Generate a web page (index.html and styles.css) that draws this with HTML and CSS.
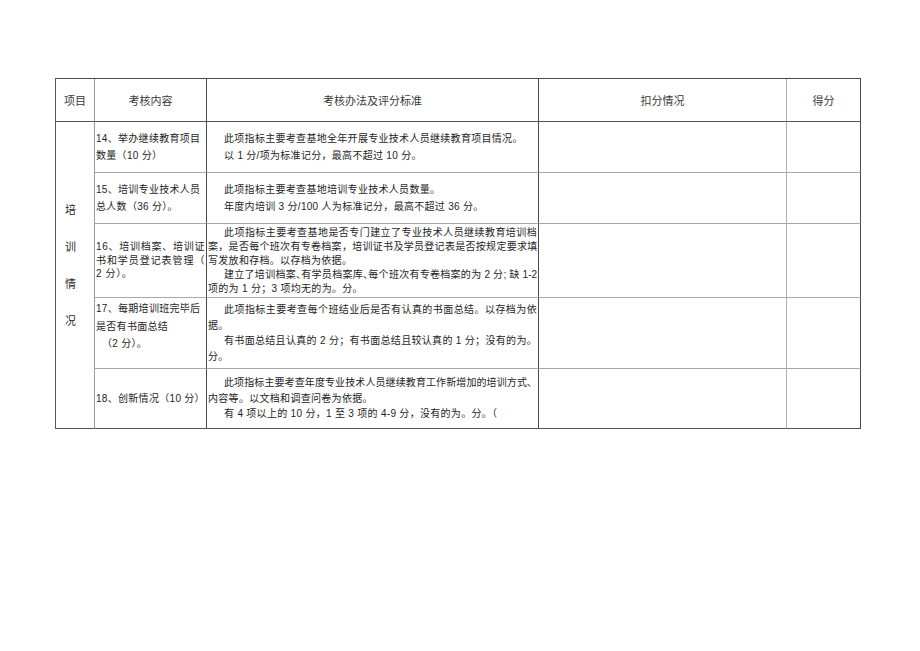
FILE: index.html
```html
<!DOCTYPE html>
<html lang="zh-CN">
<head>
<meta charset="utf-8">
<title>考核表</title>
<link rel="stylesheet" href="styles.css">
</head>
<body>
<div class="page">
  <table class="sheet">
    <thead>
      <tr class="r-head">
        <th class="c1">项目</th>
        <th class="c2">考核内容</th>
        <th class="c3">考核办法及评分标准</th>
        <th class="c4">扣分情况</th>
        <th class="c5">得分</th>
      </tr>
    </thead>
    <tbody>
      <tr class="r1">
        <td class="c1 cat" rowspan="5">
          <div class="cat-ch">培</div>
          <div class="cat-ch">训</div>
          <div class="cat-ch">情</div>
          <div class="cat-ch">况</div>
        </td>
        <td class="c2 item">
          <div class="ln">14、举办继续教育项目</div>
          <div class="ln">数量（10 分）</div>
        </td>
        <td class="c3 rule">
          <div class="ln ind">此项指标主要考查基地全年开展专业技术人员继续教育项目情况。</div>
          <div class="ln ind">以 1 分/项为标准记分，最高不超过 10 分。</div>
        </td>
        <td class="c4"></td>
        <td class="c5"></td>
      </tr>
      <tr class="r2">
        <td class="c2 item">
          <div class="ln">15、培训专业技术人员</div>
          <div class="ln">总人数（36 分）。</div>
        </td>
        <td class="c3 rule">
          <div class="ln ind">此项指标主要考查基地培训专业技术人员数量。</div>
          <div class="ln ind">年度内培训 3 分/100 人为标准记分，最高不超过 36 分。</div>
        </td>
        <td class="c4"></td>
        <td class="c5"></td>
      </tr>
      <tr class="r3">
        <td class="c2 item item-tight">
          <div class="ln full">16、培训档案、培训证</div>
          <div class="ln full">书和学员登记表管理（</div>
          <div class="ln">2 分）。</div>
        </td>
        <td class="c3 rule rule-tight">
          <div class="ln ind full">此项指标主要考查基地是否专门建立了专业技术人员继续教育培训档</div>
          <div class="ln full">案，是否每个班次有专卷档案，培训证书及学员登记表是否按规定要求填</div>
          <div class="ln">写发放和存档。以存档为依据。</div>
          <div class="ln ind full squeeze">建立了培训档案<span class="half">、</span>有学员档案库<span class="half">、</span>每个班次有专卷档案的为 2 分; 缺 1-2</div>
          <div class="ln">项的为 1 分；3 项均无的为。分。</div>
        </td>
        <td class="c4"></td>
        <td class="c5"></td>
      </tr>
      <tr class="r4">
        <td class="c2 item item-top">
          <div class="ln">17、每期培训班完毕后</div>
          <div class="ln">是否有书面总结</div>
          <div class="ln sub">（2 分）。</div>
        </td>
        <td class="c3 rule rule-mid">
          <div class="ln ind full">此项指标主要考查每个班结业后是否有认真的书面总结。以存档为依</div>
          <div class="ln">据。</div>
          <div class="ln ind full">有书面总结且认真的 2 分；有书面总结且较认真的 1 分；没有的为。</div>
          <div class="ln">分。</div>
        </td>
        <td class="c4"></td>
        <td class="c5"></td>
      </tr>
      <tr class="r5">
        <td class="c2 item">
          <div class="ln">18、创新情况（10 分）</div>
        </td>
        <td class="c3 rule rule-mid">
          <div class="ln ind full squeeze">此项指标主要考查年度专业技术人员继续教育工作新增加的培训方式、</div>
          <div class="ln">内容等。以文档和调查问卷为依据。</div>
          <div class="ln ind">有 4 项以上的 10 分，1 至 3 项的 4-9 分，没有的为。分。（</div>
        </td>
        <td class="c4"></td>
        <td class="c5"></td>
      </tr>
    </tbody>
  </table>
</div>
</body>
</html>
```

FILE: styles.css
```css
html, body {
  margin: 0;
  padding: 0;
  background: #ffffff;
}

body {
  font-family: "Liberation Sans", "Noto Sans CJK SC", sans-serif;
  color: #1e1e1e;
}

.page {
  padding: 78px 0 0 55px;
}

.sheet {
  table-layout: fixed;
  border-collapse: separate;
  border-spacing: 0;
  width: 806px;
  border-top: 1px solid #4a4a4a;
  border-left: 1px solid #5a5a5a;
}

.sheet th,
.sheet td {
  box-sizing: border-box;
  padding: 0;
  border-right: 1px solid #4a4a4a;
  border-bottom: 1px solid #a8a8a8;
  vertical-align: middle;
  overflow: hidden;
}

.sheet th {
  font-family: "Noto Sans CJK SC", sans-serif;
  font-weight: 400;
  font-size: 11px;
  color: #3a3a3a;
  text-align: center;
  border-bottom-color: #555555;
}

.c1 { width: 39px; border-right-color: #9a9a9a !important; }
.c2 { width: 112px; }
.c3 { width: 332px; }
.c4 { width: 248px; border-right-color: #b0b0b0 !important; }
.c5 { width: 74px; }

.r-head { height: 43px; }
.r1 { height: 51px; }
.r2 { height: 51px; }
.r3 { height: 74px; }
.r4 { height: 71px; }
.r5 { height: 60px; }

.r5 td { border-bottom-color: #555555; }
.cat { border-bottom-color: #555555 !important; }

.cat {
  vertical-align: top !important;
  padding: 69px 0 0 9px !important;
}

.cat-ch {
  font-family: "Noto Sans CJK SC", sans-serif;
  font-size: 11px;
  line-height: 37px;
  height: 37px;
  color: #2a2a2a;
}

.ln {
  white-space: nowrap;
  font-size: 10px;
  letter-spacing: 0.3px;
}

.item {
  padding-left: 1px !important;
  padding-right: 1px !important;
}

.item .ln { line-height: 17px; }

.item-tight .ln {
  line-height: 13.5px;
  letter-spacing: 0.6px;
}

.item-top {
  vertical-align: top !important;
  padding-top: 2px !important;
}

.item-top .ln { line-height: 17.5px; }

.sub { padding-left: 6px; }

.rule {
  padding-left: 1px !important;
  padding-right: 1px !important;
}

.rule .ln { line-height: 17px; }
.rule-tight .ln { line-height: 14px; }
.rule-mid .ln { line-height: 15.5px; }

.ind { text-indent: 16px; }

.full {
  text-align: justify;
  text-align-last: justify;
}

.ln.squeeze { letter-spacing: 0; }

.half {
  font-feature-settings: "halt";
}
```
